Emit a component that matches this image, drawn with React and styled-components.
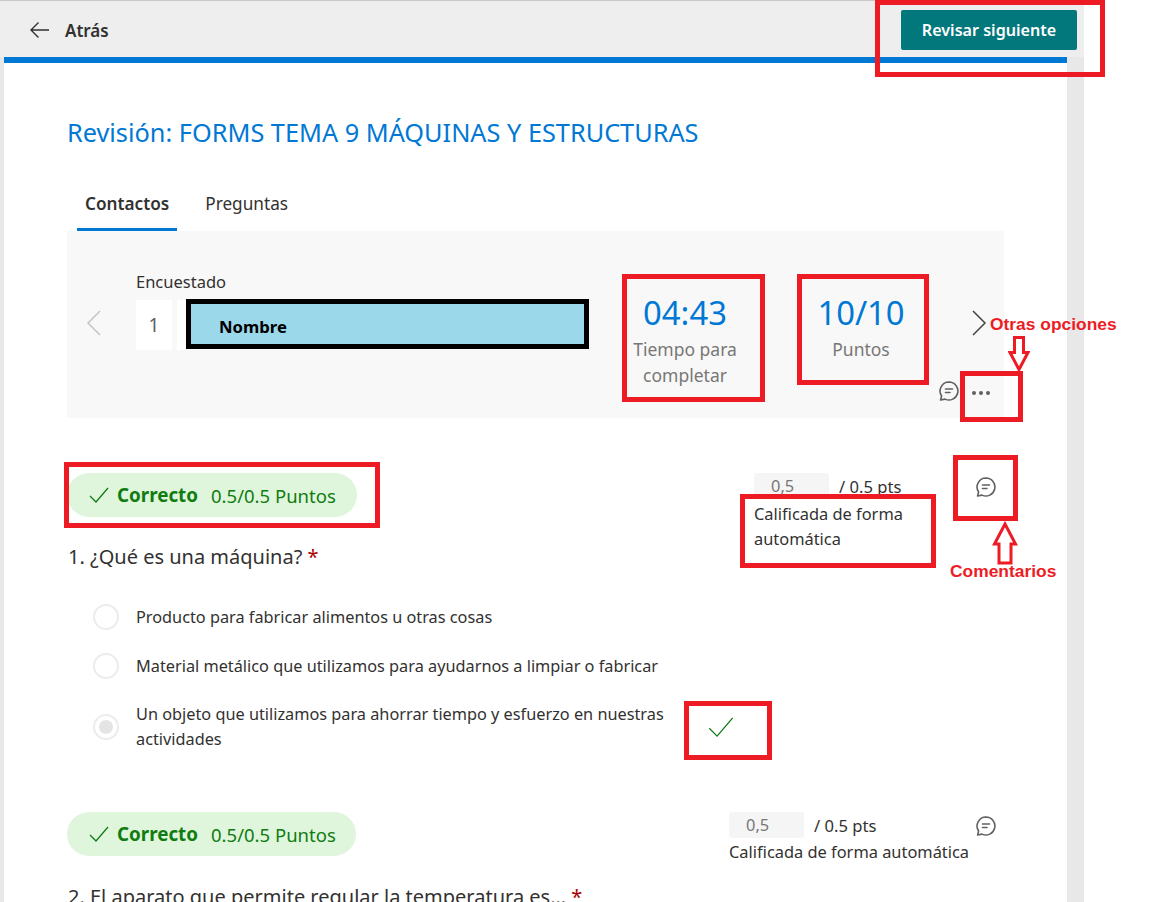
import * as React from 'react'
import styled, { createGlobalStyle } from 'styled-components'

const GlobalStyle = createGlobalStyle`
  html, body {
    margin: 0;
    background: #fff;
  }
  * {
    box-sizing: border-box;
  }
`

const ChatIcon = ({ size = 22 }) => (
  <svg width={size} height={size} viewBox="0 0 22 22" fill="none" stroke="#616161" strokeWidth="1.6" strokeLinejoin="round" strokeLinecap="round">
    <path d="M11 2a9 9 0 1 1-4 17.1L2.6 20l1-4A9 9 0 0 1 11 2z" />
    <path d="M7.5 9h7M7.5 12.5h4.5" />
  </svg>
)

const CheckIcon = ({ size = 20, weight = 1.3 }) => (
  <svg width={size} height={size} viewBox="0 0 20 20" fill="none" stroke="#107c10" strokeWidth={weight}>
    <path d="M1 11l6 6L19 3" />
  </svg>
)

const Page = styled.div`
  position: relative;
  width: 1152px;
  height: 902px;
  overflow: hidden;
  font-family: 'Noto Sans', 'Open Sans', sans-serif;
  color: #323130;
`

const Shell = styled.div`
  width: 1084px;
  height: 902px;
  padding: 0 17px 0 4px;
  background: #e8e8e8;
`

const TopBar = styled.header`
  display: flex;
  justify-content: space-between;
  align-items: flex-start;
  height: 57px;
  margin: 0 -17px 0 -4px;
  padding: 9px 7px 0 29px;
  background: #eeeeee;
  border-top: 1px solid #c8c8c8;
`

const BackLink = styled.div`
  display: flex;
  align-items: center;
  gap: 15px;
  height: 40px;
  font-size: 17px;
  font-weight: 600;
`

const NextButton = styled.button`
  width: 176px;
  height: 40px;
  border: 0;
  border-radius: 2px;
  background: #03787c;
  color: #fff;
  font-family: inherit;
  font-size: 16.1px;
  font-weight: 600;
`

const Card = styled.main`
  height: 845px;
  padding: 53px 63px 0;
  background: #fff;
  border-top: 6px solid #0078d4;
`

const Title = styled.h1`
  margin: 0;
  font-size: 25.3px;
  font-weight: 400;
  line-height: 32px;
  color: #0078d4;
  white-space: nowrap;
`

const Tabs = styled.nav`
  display: flex;
  gap: 20px;
  margin: 27px 0 0 10px;
`

const Tab = styled.div`
  height: 56px;
  padding: 0 8px;
  font-size: 17.2px;
  font-weight: ${(p) => (p.$active ? 600 : 400)};
  line-height: 57px;
  border-bottom: 3px solid ${(p) => (p.$active ? '#0078d4' : 'transparent')};
`

const SummaryPanel = styled.section`
  display: flex;
  height: 187px;
  padding: 40px 0 0 19px;
  background: #f8f8f8;
`

const Chevron = styled.svg`
  flex: none;
  width: 16px;
  height: 26px;
  margin-top: ${(p) => p.$top}px;
  margin-left: ${(p) => p.$left || 0}px;
  fill: none;
  stroke: ${(p) => p.$color};
  stroke-width: 1.5;
`

const Respondent = styled.div`
  width: 453px;
  margin-left: 34px;
`

const RespondentLabel = styled.div`
  height: 29px;
  font-size: 16.5px;
  line-height: 22px;
`

const RespondentRow = styled.div`
  display: flex;
  height: 50px;
`

const IndexBox = styled.div`
  width: 36px;
  background: #fff;
  color: #605e5c;
  font-size: 19px;
  line-height: 50px;
  text-align: center;
`

const NameGap = styled.div`
  width: 14px;
  background: linear-gradient(90deg, transparent 5px, #fff 5px);
`

const NameBox = styled.div`
  width: 403px;
  height: 50px;
  margin-top: -1px;
  padding-left: 28px;
  background: #9bd8ea;
  border: 5px solid #000;
  color: #000;
  font-size: 16.7px;
  font-weight: 700;
  line-height: 46px;
`

const Stat = styled.div`
  flex: none;
  width: ${(p) => p.$width}px;
  margin-top: 21px;
  margin-left: ${(p) => p.$left}px;
  text-align: center;
`

const StatValue = styled.div`
  font-size: 32.8px;
  line-height: 42px;
  color: #0078d4;
`

const StatLabel = styled.div`
  margin-top: 2px;
  font-size: 17.5px;
  line-height: 26px;
  color: #797775;
`

const PanelEnd = styled.div`
  display: flex;
  flex-direction: column;
  width: 66px;
  margin-left: 17px;
  padding-bottom: 16px;
`

const PanelActions = styled.div`
  display: flex;
  align-items: center;
  gap: 12px;
  margin-top: auto;
`

const Dots = styled.div`
  display: flex;
  gap: 3px;
  margin-top: 4px;
`

const Dot = styled.i`
  width: 4px;
  height: 4px;
  border-radius: 50%;
  background: #616161;
`

const Question = styled.section`
  margin-top: ${(p) => p.$top}px;
`

const QuestionHead = styled.div`
  display: flex;
  justify-content: space-between;
  align-items: flex-start;
`

const ResultPill = styled.div`
  display: flex;
  align-items: center;
  width: ${(p) => p.$width}px;
  height: 44px;
  padding-left: 22px;
  border-radius: 22px;
  background: #dff6dd;
  color: #107c10;
  font-size: 18.5px;
  white-space: nowrap;
`

const ResultLabel = styled.b`
  margin: 0 13px 0 8px;
  font-size: 18.8px;
  font-weight: 700;
`

const GradeArea = styled.div`
  display: flex;
  justify-content: space-between;
  width: ${(p) => p.$width}px;
  padding-right: 7px;
`

const GradeRow = styled.div`
  display: flex;
  align-items: center;
  gap: 10px;
  font-size: 16.6px;
`

const GradeInput = styled.div`
  width: 75px;
  height: 26px;
  border-radius: 3px;
  background: #f5f5f5;
  color: #797775;
  font-size: 16.4px;
  line-height: 26px;
  padding-left: 17px;
`

const GradeCaption = styled.div`
  margin-top: 2px;
  font-size: 16.4px;
  line-height: 24px;
  white-space: nowrap;
`

const CommentSlot = styled.div`
  height: 28px;
  display: flex;
  align-items: center;
`

const QuestionTitle = styled.h2`
  margin: ${(p) => p.$top}px 0 0 1px;
  font-size: 20px;
  font-weight: 400;
  line-height: 28px;
  white-space: nowrap;
`

const Required = styled.span`
  color: #a80000;
`

const Options = styled.div`
  display: flex;
  flex-direction: column;
  gap: 23px;
  margin-top: 33px;
`

const Option = styled.div`
  display: flex;
  align-items: center;
  gap: 17px;
  padding-left: 26px;
`

const Radio = styled.span`
  display: flex;
  flex: none;
  align-items: center;
  justify-content: center;
  width: 26px;
  height: 26px;
  border: 2px solid #ececec;
  border-radius: 50%;
  &::after {
    content: '';
    width: 14px;
    height: 14px;
    border-radius: 50%;
    background: ${(p) => (p.$checked ? '#e4e4e4' : 'transparent')};
  }
`

const OptionText = styled.div`
  width: ${(p) => (p.$wrap ? '536px' : 'auto')};
  font-size: 16.3px;
  line-height: 25px;
`

const OptionMark = styled.div`
  display: flex;
  margin-left: 19px;
`

/* cuadros y textos rojos pegados encima de la captura */
const RedBox = styled.div`
  position: absolute;
  left: ${(p) => p.$x}px;
  top: ${(p) => p.$y}px;
  width: ${(p) => p.$w}px;
  height: ${(p) => p.$h}px;
  border: 5px solid #ed1c24;
`

const CaptionBox = styled(RedBox)`
  padding: 2px 0 0 9px;
  background: #fff;
  font-size: 16.4px;
  line-height: 25px;
`

const RedLabel = styled.div`
  position: absolute;
  left: ${(p) => p.$x}px;
  top: ${(p) => p.$y}px;
  color: #ed1c24;
  font-family: 'Liberation Sans', Arial, sans-serif;
  font-size: 17.4px;
  font-weight: 700;
  line-height: 20px;
  white-space: nowrap;
`

const RedArrow = styled.svg`
  position: absolute;
  left: ${(p) => p.$x}px;
  top: ${(p) => p.$y}px;
  fill: #fff;
  stroke: #ed1c24;
  stroke-width: 3;
`

const Grade = ({ width, caption }) => (
  <GradeArea $width={width}>
    <div>
      <GradeRow>
        <GradeInput>0,5</GradeInput>
        / 0.5 pts
      </GradeRow>
      {caption && <GradeCaption>{caption}</GradeCaption>}
    </div>
    <CommentSlot>
      <ChatIcon />
    </CommentSlot>
  </GradeArea>
)

const Result = ({ width }) => (
  <ResultPill $width={width}>
    <CheckIcon />
    <ResultLabel>Correcto</ResultLabel>
    0.5/0.5 Puntos
  </ResultPill>
)

export default function App () {
  return (
    <Page>
      <GlobalStyle />
      <Shell>
        <TopBar>
          <BackLink>
            <svg width="21" height="18" viewBox="0 0 21 18" fill="none" stroke="#323130" strokeWidth="1.4">
              <path d="M20 9H2M9.500 1.500L2 9l7.500 7.500" />
            </svg>
            Atrás
          </BackLink>
          <NextButton>Revisar siguiente</NextButton>
        </TopBar>
        <Card>
          <Title>Revisión: FORMS TEMA 9 MÁQUINAS Y ESTRUCTURAS</Title>
          <Tabs>
            <Tab $active>Contactos</Tab>
            <Tab>Preguntas</Tab>
          </Tabs>
          <SummaryPanel>
            <Chevron $top={39} $color="#c4c4c4" viewBox="0 0 16 26">
              <path d="M14 1L2 13l12 12" />
            </Chevron>
            <Respondent>
              <RespondentLabel>Encuestado</RespondentLabel>
              <RespondentRow>
                <IndexBox>1</IndexBox>
                <NameGap />
                <NameBox>Nombre</NameBox>
              </RespondentRow>
            </Respondent>
            <Stat $width={120} $left={36}>
              <StatValue>04:43</StatValue>
              <StatLabel>Tiempo para completar</StatLabel>
            </Stat>
            <Stat $width={120} $left={56}>
              <StatValue>10/10</StatValue>
              <StatLabel>Puntos</StatLabel>
            </Stat>
            <PanelEnd>
              <Chevron $top={39} $left={33} $color="#484644" viewBox="0 0 16 26">
                <path d="M2 1l12 12L2 25" />
              </Chevron>
              <PanelActions>
                <ChatIcon />
                <Dots>
                  <Dot />
                  <Dot />
                  <Dot />
                </Dots>
              </PanelActions>
            </PanelEnd>
          </SummaryPanel>

          <Question $top={55}>
            <QuestionHead>
              <Result width={290} />
              <Grade width={250} />
            </QuestionHead>
            <QuestionTitle $top={26}>
              1. ¿Qué es una máquina? <Required>*</Required>
            </QuestionTitle>
            <Options>
              <Option>
                <Radio />
                <OptionText>Producto para fabricar alimentos u otras cosas</OptionText>
              </Option>
              <Option>
                <Radio />
                <OptionText>Material metálico que utilizamos para ayudarnos a limpiar o fabricar</OptionText>
              </Option>
              <Option>
                <Radio $checked />
                <OptionText $wrap>Un objeto que utilizamos para ahorrar tiempo y esfuerzo en nuestras actividades</OptionText>
                <OptionMark>
                  <CheckIcon size={26} weight={1} />
                </OptionMark>
              </Option>
            </Options>
          </Question>

          <Question $top={60}>
            <QuestionHead>
              <Result width={289} />
              <Grade width={275} caption="Calificada de forma automática" />
            </QuestionHead>
            <QuestionTitle $top={19}>
              2. El aparato que permite regular la temperatura es… <Required>*</Required>
            </QuestionTitle>
          </Question>
        </Card>
      </Shell>

      <RedBox $x={875} $y={0} $w={230} $h={77} />
      <RedBox $x={622} $y={274} $w={143} $h={128} />
      <RedBox $x={797} $y={274} $w={132} $h={111} />
      <RedBox $x={960} $y={371} $w={63} $h={51} />
      <RedBox $x={64} $y={462} $w={316} $h={66} />
      <CaptionBox $x={740} $y={494} $w={196} $h={74}>
        Calificada de forma automática
      </CaptionBox>
      <RedBox $x={953} $y={455} $w={65} $h={66} />
      <RedBox $x={684} $y={701} $w={88} $h={59} />

      <RedLabel $x={990} $y={314}>Otras opciones</RedLabel>
      <RedLabel $x={950} $y={561}>Comentarios</RedLabel>
      <RedArrow $x={1008} $y={336} width="22" height="36" viewBox="0 0 22 36">
        <path d="M6.500 1.500h9v15H20L11 33.500 2 16.500h4.500z" />
      </RedArrow>
      <RedArrow $x={992} $y={521} width="26" height="44" viewBox="0 0 26 44">
        <path d="M13 3l10.500 20H19v19H7V23H2.500z" />
      </RedArrow>
    </Page>
  )
}
